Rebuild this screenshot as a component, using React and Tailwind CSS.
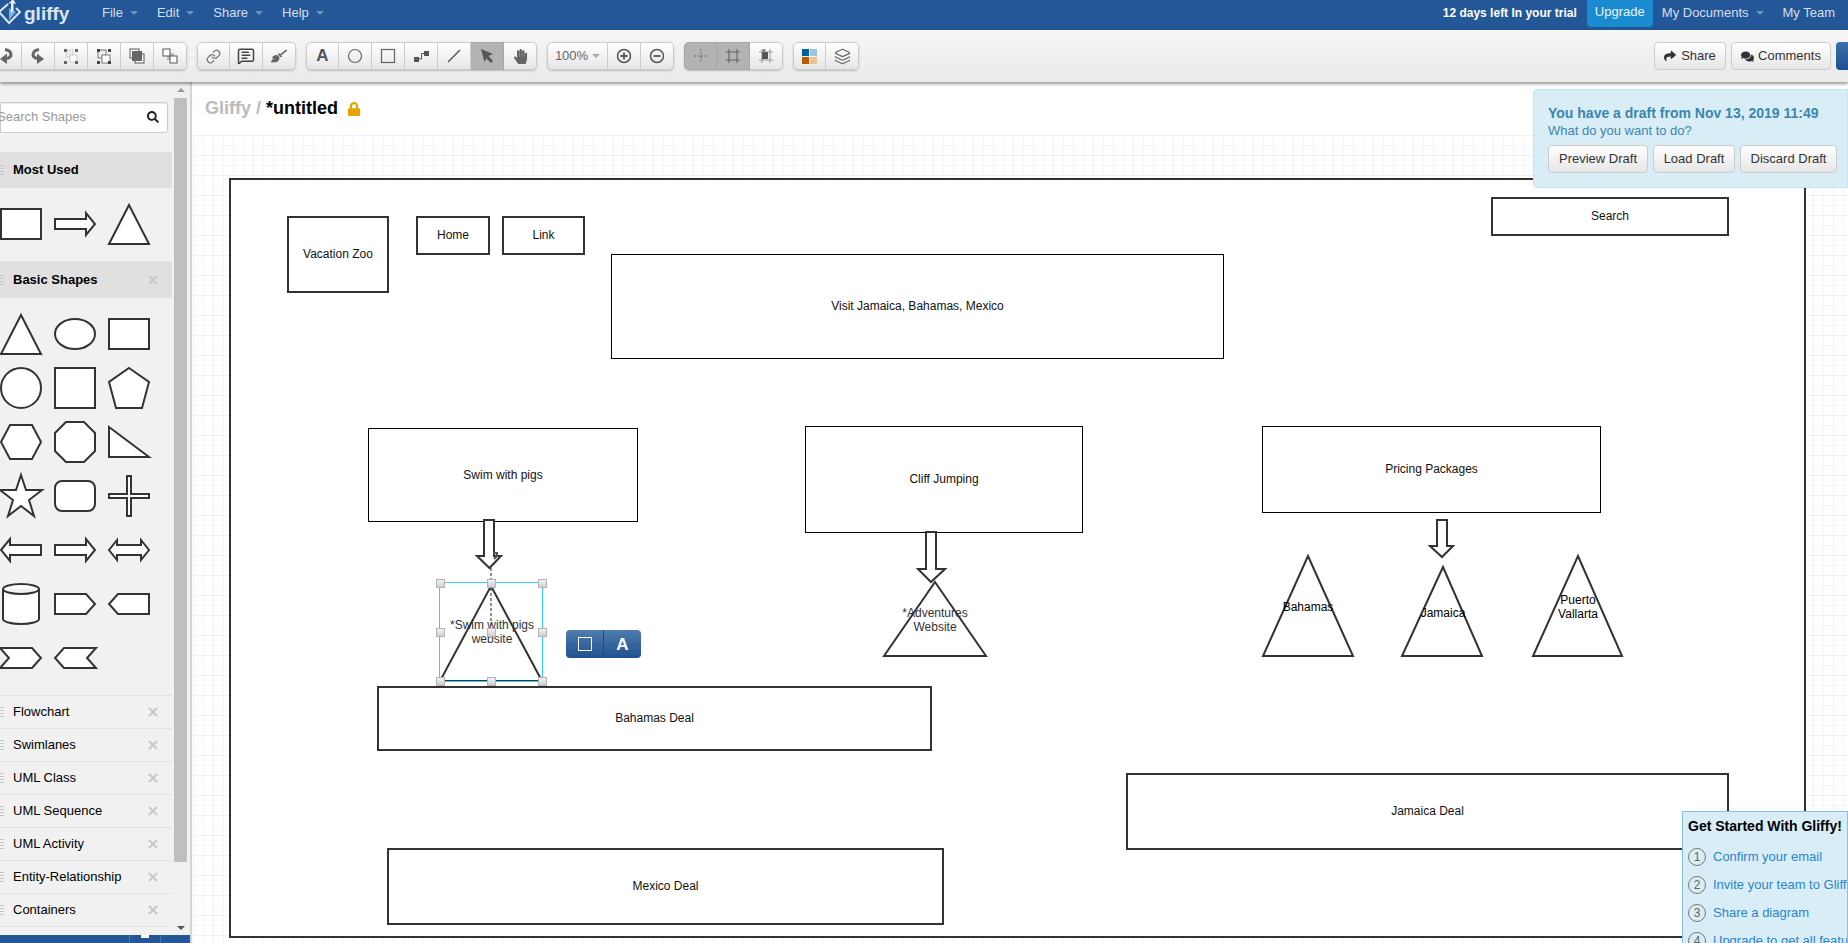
import { FaBroom, FaComments, FaHandPaper, FaLock, FaSearch, FaShare } from "react-icons/fa";
import { Layers, Link as LinkIcon, MessageSquareText } from "lucide-react";

const Caret = ({ className = "border-t-[#6f93bd]" }) => (
    <span className={`inline-block w-0 h-0 border-x-[4px] border-x-transparent border-t-[4px] ${className}`} />
);

const Logo = () => (
    <svg width="24" height="30" viewBox="0 0 24 30" className="shrink-0">
        <path d="M10 5 L1 13 L11 24 L22 13 L18 9" fill="none" stroke="#dbe6f2" strokeWidth="2" />
        <path d="M11 21 L18 13 L11 9 Z" fill="#7fb0dc" />
        <path d="M13 14 L13 4 L10 5 L15 0 L18 5 L15.5 4.5 L15.5 12 Z" fill="#e8f0f8" />
    </svg>
);

const TopBar = () => (
    <div className="h-[30px] bg-[#235797] flex items-start shrink-0 text-[13px] text-[#d5dfeb]">
        <div className="w-[102px] h-[27px] flex items-center -ml-[2px] shrink-0">
            <Logo />
            <span className="text-[19px] font-bold text-[#dbe6f2] leading-none -mt-[1px] ml-[2px]">gliffy</span>
        </div>
        <div className="flex gap-[19px] h-[26px] items-center ml-[2px]">
            {["File", "Edit", "Share", "Help"].map((m) => (
                <div key={m} className="flex items-center gap-[7px]">
                    {m}
                    <Caret />
                </div>
            ))}
        </div>
        <div className="ml-auto flex items-start mr-[13px]">
            <span className="text-[12px] font-bold text-white h-[26px] leading-[26px] mr-[10px]">
                12 days left In your trial
            </span>
            <span className="bg-[#1a8bd0] text-[#e8f3fb] w-[66px] h-[27px] leading-[24px] text-center rounded-b-[4px]">
                Upgrade
            </span>
            <span className="ml-[9px] h-[26px] flex items-center gap-[7px]">
                My Documents
                <Caret />
            </span>
            <span className="ml-[19px] h-[26px] leading-[26px]">My Team</span>
        </div>
    </div>
);

const Group = ({ children }) => (
    <div className="flex rounded-[5px] shadow-[0_1px_2px_rgba(0,0,0,0.2)] shrink-0">{children}</div>
);

const Btn = ({ children, active, w = "w-[33px]" }) => (
    <div
        className={`${w} h-[28px] flex items-center justify-center border-y border-r first:border-l first:rounded-l-[5px] last:rounded-r-[5px] ${
            active
                ? "bg-[#b3b3b3] border-[#a6a6a6]"
                : "bg-gradient-to-b from-white to-[#e6e6e6] border-[#cccccc]"
        }`}
    >
        {children}
    </div>
);

const Ico = ({ children }) => (
    <svg width="20" height="20" viewBox="0 0 20 20" fill="none">
        {children}
    </svg>
);

const Dots = ({ fill }) => (
    <g fill={fill}>
        <rect x="3" y="3" width="3" height="3" />
        <rect x="14" y="3" width="3" height="3" />
        <rect x="3" y="15" width="3" height="3" />
        <rect x="14" y="15" width="3" height="3" />
    </g>
);

const Toolbar = () => (
    <div className="h-[52px] shrink-0 relative z-10 bg-gradient-to-b from-[#f6f6f6] to-[#eaeaea] shadow-[0_2px_3px_rgba(0,0,0,0.4)] flex items-center gap-[10px]">
        <div className="flex gap-[10px] -ml-[11px]">
            <Group>
                <Btn>
                    <Ico>
                        <g transform="translate(20 0) scale(-1 1)">
                            <path d="M11 3.5C4 4.5 3 11 9 12.5" stroke="#666" strokeWidth="3" />
                            <path d="M9 7.5L16 13L9 18Z" fill="#666" />
                        </g>
                    </Ico>
                </Btn>
                <Btn>
                    <Ico>
                        <path d="M11 3.5C4 4.5 3 11 9 12.5" stroke="#666" strokeWidth="3" />
                        <path d="M9 7.5L16 13L9 18Z" fill="#666" />
                    </Ico>
                </Btn>
                <Btn>
                    <Ico>
                        <rect x="5" y="4" width="7" height="7" fill="#eee" stroke="#ccc" />
                        <rect x="9" y="9" width="7" height="7" fill="#fff" stroke="#ccc" />
                        <Dots fill="#666" />
                    </Ico>
                </Btn>
                <Btn>
                    <Ico>
                        <rect x="4" y="4" width="8" height="8" fill="#eee" stroke="#777" />
                        <rect x="8" y="9" width="8" height="8" fill="#fff" stroke="#777" />
                        <Dots fill="#444" />
                    </Ico>
                </Btn>
                <Btn>
                    <Ico>
                        <rect x="8" y="8" width="9" height="9" fill="#fff" stroke="#555" />
                        <rect x="3" y="3" width="9" height="9" fill="#fff" stroke="#555" />
                        <rect x="5" y="5" width="10" height="10" fill="#666" />
                    </Ico>
                </Btn>
                <Btn>
                    <Ico>
                        <rect x="7" y="7" width="7" height="7" fill="#bbb" />
                        <rect x="3" y="3" width="7" height="7" fill="#fff" stroke="#555" />
                        <rect x="10" y="10" width="7" height="7" fill="#fff" stroke="#555" />
                    </Ico>
                </Btn>
            </Group>
            <Group>
                <Btn>
                    <LinkIcon size={15} color="#777" strokeWidth={2} />
                </Btn>
                <Btn>
                    <MessageSquareText size={18} color="#444" strokeWidth={2} />
                </Btn>
                <Btn>
                    <FaBroom size={16} color="#666" />
                </Btn>
            </Group>
            <Group>
                <Btn>
                    <span className="text-[17px] font-bold text-[#555]">A</span>
                </Btn>
                <Btn>
                    <Ico>
                        <circle cx="10" cy="10" r="6.5" stroke="#666" strokeWidth="1.2" />
                    </Ico>
                </Btn>
                <Btn>
                    <Ico>
                        <rect x="3.5" y="3.5" width="13" height="13" stroke="#666" strokeWidth="1.2" />
                    </Ico>
                </Btn>
                <Btn>
                    <Ico>
                        <rect x="3" y="11" width="5" height="5" fill="#555" />
                        <rect x="13" y="5" width="5" height="5" fill="#555" />
                        <path d="M8 13H10.5V7.5H13" stroke="#555" />
                    </Ico>
                </Btn>
                <Btn>
                    <Ico>
                        <path d="M4 16L16 4" stroke="#555" strokeWidth="1.5" />
                    </Ico>
                </Btn>
                <Btn active>
                    <Ico>
                        <path d="M4 3L16 8L11.5 10L16 15L14 17L9.5 12.5L7.5 16Z" fill="#555" />
                    </Ico>
                </Btn>
                <Btn>
                    <FaHandPaper size={15} color="#666" />
                </Btn>
            </Group>
            <Group>
                <Btn w="w-[61px]">
                    <span className="text-[13px] text-[#666] mr-[4px]">100%</span>
                    <Caret className="border-t-[#aaa]" />
                </Btn>
                <Btn>
                    <Ico>
                        <circle cx="10" cy="10" r="6.5" stroke="#555" strokeWidth="1.5" />
                        <path d="M6.5 10H13.5M10 6.5V13.5" stroke="#555" strokeWidth="1.8" />
                    </Ico>
                </Btn>
                <Btn>
                    <Ico>
                        <circle cx="10" cy="10" r="6.5" stroke="#555" strokeWidth="1.5" />
                        <path d="M6.5 10H13.5" stroke="#555" strokeWidth="1.8" />
                    </Ico>
                </Btn>
            </Group>
            <Group>
                <Btn active>
                    <Ico>
                        <path d="M3 10H17M10 3V17" stroke="#666" strokeDasharray="2 1.5" />
                    </Ico>
                </Btn>
                <Btn active>
                    <Ico>
                        <path d="M3 6H17M3 14H17M6 3V17M14 3V17" stroke="#666" strokeWidth="1.2" />
                    </Ico>
                </Btn>
                <Btn>
                    <Ico>
                        <path d="M3 6H17M3 14H17M6 3V17M14 3V17" stroke="#999" />
                        <rect x="6" y="6" width="6" height="7" fill="#555" />
                        <path d="M6 3.5H10L8 6Z" fill="#555" />
                    </Ico>
                </Btn>
            </Group>
            <Group>
                <Btn>
                    <div className="grid grid-cols-2 gap-[1px]">
                        <div className="w-[7px] h-[7px] bg-[#005f9e]" />
                        <div className="w-[7px] h-[7px] bg-[#9cc3e0]" />
                        <div className="w-[7px] h-[7px] bg-[#b85a00]" />
                        <div className="w-[7px] h-[7px] bg-[#e8c197]" />
                    </div>
                </Btn>
                <Btn>
                    <Layers size={17} color="#666" strokeWidth={1.6} />
                </Btn>
            </Group>
        </div>
        <div className="ml-auto flex gap-[5px] -mr-[48px] text-[13px] text-[#333]">
            <div className="w-[72px] h-[28px] rounded-[4px] border border-[#ccc] bg-gradient-to-b from-white to-[#e6e6e6] flex items-center justify-center gap-[5px]">
                <FaShare size={12} color="#333" />
                Share
            </div>
            <div className="w-[100px] h-[28px] rounded-[4px] border border-[#ccc] bg-gradient-to-b from-white to-[#e6e6e6] flex items-center justify-center gap-[4px]">
                <FaComments size={13} color="#333" />
                Comments
            </div>
            <div className="w-[60px] h-[28px] rounded-[4px] bg-gradient-to-b from-[#3d70ab] to-[#1f4f8f]" />
        </div>
    </div>
);

const Shape = ({ children }) => (
    <svg width="54" height="54" viewBox="0 0 54 54" fill="#fff" stroke="#333" strokeWidth="2">
        {children}
    </svg>
);

const RIGHT_ARROW = "7,22 38,22 38,16 47,27 38,38 38,32 7,32";

const basicShapes = [
    <polygon points="27,8 47,47 7,47" />,
    <ellipse cx="27" cy="27" rx="20" ry="15" />,
    <rect x="7" y="12" width="40" height="30" />,
    <circle cx="27" cy="27" r="20" />,
    <rect x="7" y="7" width="40" height="40" />,
    <polygon points="27,7 47,21 40,47 14,47 7,21" />,
    <polygon points="7,27 16,10 38,10 47,27 38,44 16,44" />,
    <polygon points="7,18 18,7 36,7 47,18 47,36 36,47 18,47 7,36" />,
    <polygon points="7,12 47,42 7,42" />,
    <polygon points="27,6 32,21 48,21 35,31 40,47 27,37 14,47 19,31 6,21 22,21" />,
    <rect x="7" y="12" width="40" height="30" rx="7" />,
    <polygon points="25,7 29,7 29,25 47,25 47,29 29,29 29,47 25,47 25,29 7,29 7,25 25,25" />,
    <polygon points="7,27 16,16 16,22 47,22 47,32 16,32 16,38" />,
    <polygon points={RIGHT_ARROW} />,
    <polygon points="7,27 15,17 15,22 39,22 39,17 47,27 39,37 39,32 15,32 15,37" />,
    <path d="M9 12a18 5 0 0 1 36 0v30a18 5 0 0 1-36 0zM9 12a18 5 0 0 0 36 0" />,
    <polygon points="7,17 38,17 47,27 38,37 7,37" />,
    <polygon points="47,17 16,17 7,27 16,37 47,37" />,
    <polygon points="6,17 38,17 47,27 38,37 6,37 15,27" />,
    <polygon points="48,17 16,17 7,27 16,37 48,37 39,27" />,
];

const Grip = () => (
    <div className="flex flex-col gap-[2px] w-[4px] shrink-0">
        <div className="h-px bg-[#c6c6c6]" />
        <div className="h-px bg-[#c6c6c6]" />
        <div className="h-px bg-[#c6c6c6]" />
        <div className="h-px bg-[#c6c6c6]" />
    </div>
);

const CloseX = () => (
    <svg width="10" height="10" viewBox="0 0 10 10" className="ml-auto mr-[14px] shrink-0">
        <path d="M1 1L9 9M9 1L1 9" stroke="#c8c8c8" strokeWidth="2" />
    </svg>
);

const Sidebar = () => (
    <div className="w-[192px] shrink-0 flex flex-col bg-[#f1f1f1] border-r-2 border-[#d4d4d4] text-[13px] text-black overflow-hidden">
        <div className="flex flex-1 min-h-0">
            <div className="w-[174px] shrink-0 pt-[20px]">
                <div className="w-[168px] h-[31px] pb-[2px] bg-white border border-[#ccc] rounded-r-[3px] flex items-center text-[13px] text-[#999] shadow-[inset_0_1px_1px_rgba(0,0,0,0.08)]">
                    <span className="-ml-[4px]">Search Shapes</span>
                    <FaSearch size={12} color="#222" className="ml-auto mr-[8px]" />
                </div>
                <div className="w-[172px] h-[36px] mt-[19px] bg-[#e0e0e0] flex items-center gap-[9px] font-bold">
                    <Grip />
                    Most Used
                </div>
                <div className="grid grid-cols-[54px_54px_54px] auto-rows-[54px] -ml-[6px] pt-[9px] pb-[10px]">
                    <Shape>
                        <rect x="7" y="12" width="40" height="30" />
                    </Shape>
                    <Shape>
                        <polygon points={RIGHT_ARROW} />
                    </Shape>
                    <Shape>
                        <polygon points="27,8 47,47 7,47" />
                    </Shape>
                </div>
                <div className="w-[172px] h-[37px] bg-[#e0e0e0] flex items-center gap-[9px] font-bold">
                    <Grip />
                    Basic Shapes
                    <CloseX />
                </div>
                <div className="grid grid-cols-[54px_54px_54px] auto-rows-[54px] -ml-[6px] pt-[9px] pb-[10px]">
                    {basicShapes.map((s, i) => (
                        <Shape key={i}>{s}</Shape>
                    ))}
                </div>
                <div className="w-[172px] border-t border-[#e2e2e2]">
                    {["Flowchart", "Swimlanes", "UML Class", "UML Sequence", "UML Activity", "Entity-Relationship", "Containers"].map((name) => (
                        <div key={name} className="h-[33px] border-b border-[#e2e2e2] flex items-center gap-[9px]">
                            <Grip />
                            {name}
                            <CloseX />
                        </div>
                    ))}
                </div>
            </div>
            <div className="w-[13px] shrink-0 flex flex-col items-center pt-[6px]">
                <Caret className="rotate-180 border-t-[#999]" />
                <div className="w-full h-[767px] mt-[6px] bg-[#bfbfbf]" />
                <div className="mt-[54px]">
                    <Caret className="border-t-[#555]" />
                </div>
            </div>
        </div>
        <div className="h-[8px] shrink-0 -mr-[3px] bg-[#235797] flex justify-end">
            <div className="w-[31px] border-l border-[#4a76ad] flex justify-center">
                <div className="w-[8px] h-[3px] bg-white" />
            </div>
            <div className="w-[33px] border-l border-[#4a76ad]" />
        </div>
    </div>
);

const Box = ({ className, children, thin }) => (
    <div
        className={`absolute flex items-center justify-center pb-[1px] text-[12px] text-[#111] bg-white ${
            thin ? "border border-black" : "border-2 border-[#333]"
        } ${className}`}
    >
        {children}
    </div>
);

const Label = ({ className, children }) => (
    <div className={`absolute w-[100px] text-center text-[12px] leading-[14px] text-[#222] ${className}`}>{children}</div>
);

const Handle = ({ className }) => (
    <div className={`absolute w-[9px] h-[9px] border border-[#b4b4b4] bg-gradient-to-b from-[#f2f2f2] to-[#cfcfcf] ${className}`} />
);

const Diagram = () => (
    <div className="absolute inset-0">
        <div className="absolute left-[39px] top-[96px] w-[1577px] h-[760px] bg-white border-2 border-[#333]" />
        <Box className="left-[97px] top-[134px] w-[102px] h-[77px]">Vacation Zoo</Box>
        <Box className="left-[226px] top-[134px] w-[74px] h-[39px]">Home</Box>
        <Box className="left-[312px] top-[134px] w-[83px] h-[39px]">Link</Box>
        <Box thin className="left-[421px] top-[172px] w-[613px] h-[105px]">Visit Jamaica, Bahamas, Mexico</Box>
        <Box className="left-[1301px] top-[115px] w-[238px] h-[39px]">Search</Box>
        <Box thin className="left-[178px] top-[346px] w-[270px] h-[94px]">Swim with pigs</Box>
        <Box thin className="left-[615px] top-[344px] w-[278px] h-[107px]">Cliff Jumping</Box>
        <Box thin className="left-[1072px] top-[344px] w-[339px] h-[87px]">Pricing Packages</Box>
        <Box className="left-[187px] top-[604px] w-[555px] h-[65px]">Bahamas Deal</Box>
        <Box className="left-[936px] top-[691px] w-[603px] h-[77px]">Jamaica Deal</Box>
        <Box className="left-[197px] top-[766px] w-[557px] h-[77px]">Mexico Deal</Box>

        <svg className="absolute inset-0 w-full h-full" viewBox="190 82 1658 861" fill="none" stroke="#333" strokeWidth="2">
            <polygon points="484,520 494,520 494,556 501,556 489.5,568 477,556 484,556" fill="#fff" />
            <polygon points="926,532 936,532 936,569 945,569 931,582 918,569 926,569" fill="#fff" />
            <polygon points="1437,520 1447,520 1447,546 1453,546 1442,557 1430,546 1437,546" fill="#fff" />
            <polygon points="491,586 542,681 440,681" fill="#fff" />
            <polygon points="935,582 986,656 884,656" fill="#fff" />
            <polygon points="1308,556 1353,656 1263,656" fill="#fff" />
            <polygon points="1443,567 1482,656 1402,656" fill="#fff" />
            <polygon points="1578,556 1622,656 1533,656" fill="#fff" />
            <path d="M491 568V630" stroke="#222" strokeWidth="1" strokeDasharray="3 2" />
            <path d="M493 553H497V556L494 559" stroke="#555" strokeWidth="2" />
            <rect x="439.5" y="582.5" width="103" height="99" stroke="#33ccff" strokeWidth="1" />
        </svg>

        <Label className="left-[252px] top-[536px] text-[#333]">
            *Swim with pigs
            <br />
            website
        </Label>
        <Label className="left-[695px] top-[524px] text-[#333]">
            *Adventures
            <br />
            Website
        </Label>
        <Label className="left-[1068px] top-[518px] text-black">Bahamas</Label>
        <Label className="left-[1203px] top-[524px] text-black">Jamaica</Label>
        <Label className="left-[1338px] top-[511px] text-black">
            Puerto
            <br />
            Vallarta
        </Label>

        <Handle className="left-[246px] top-[497px]" />
        <Handle className="left-[297px] top-[497px]" />
        <Handle className="left-[348px] top-[497px]" />
        <Handle className="left-[246px] top-[546px]" />
        <Handle className="left-[297px] top-[546px]" />
        <Handle className="left-[348px] top-[546px]" />
        <Handle className="left-[246px] top-[595px]" />
        <Handle className="left-[297px] top-[595px]" />
        <Handle className="left-[348px] top-[595px]" />

        <div className="absolute left-[376px] top-[548px] w-[75px] h-[28px] rounded-[4px] bg-gradient-to-b from-[#4f7dae] to-[#20508f] flex items-center text-white">
            <div className="w-[38px] h-full border-r border-[#1d4a82] flex items-center justify-center">
                <div className="w-[14px] h-[14px] border border-white" />
            </div>
            <div className="flex-1 text-center text-[17px] font-bold leading-none">A</div>
        </div>
    </div>
);

const DraftPanel = () => (
    <div className="absolute left-[1343px] right-0 top-[7px] h-[99px] bg-[#d9edf7] border border-[#bce8f1] rounded-l-[4px] pl-[14px] pt-[15px] text-[#3a87ad]">
        <div className="text-[14px] font-bold leading-[17px]">You have a draft from Nov 13, 2019 11:49</div>
        <div className="text-[13px] leading-[17px]">What do you want to do?</div>
        <div className="flex gap-[5px] mt-[6px] text-[13px] text-[#333]">
            <div className="w-[100px] h-[28px] rounded-[4px] border border-[#ccc] bg-gradient-to-b from-white to-[#e6e6e6] flex items-center justify-center">
                Preview Draft
            </div>
            <div className="w-[82px] h-[28px] rounded-[4px] border border-[#ccc] bg-gradient-to-b from-white to-[#e6e6e6] flex items-center justify-center">
                Load Draft
            </div>
            <div className="w-[97px] h-[28px] rounded-[4px] border border-[#ccc] bg-gradient-to-b from-white to-[#e6e6e6] flex items-center justify-center">
                Discard Draft
            </div>
        </div>
    </div>
);

const GetStarted = () => (
    <div className="absolute left-[1492px] right-0 top-[729px] h-[160px] bg-[#d9edf7] border border-[#85c0e6] pl-[5px] pt-[6px] whitespace-nowrap overflow-hidden">
        <div className="text-[14px] font-bold text-black leading-[17px] mb-[8px]">Get Started With Gliffy!</div>
        {["Confirm your email", "Invite your team to Gliffy", "Share a diagram", "Upgrade to get all features"].map((step, i) => (
            <div key={step} className="h-[28px] flex items-center text-[13px] text-[#2a85cc]">
                <span className="w-[18px] h-[18px] rounded-full border border-[#777] text-[#666] flex items-center justify-center text-[12px] shrink-0 mr-[7px]">
                    {i + 1}
                </span>
                {step}
            </div>
        ))}
    </div>
);

export default function App() {
    return (
        <div className="w-[1848px] h-[943px] overflow-hidden flex flex-col bg-white [font-family:'Liberation_Sans',Arial,sans-serif]">
            <TopBar />
            <Toolbar />
            <div className="flex flex-1 min-h-0">
                <Sidebar />
                <div className="relative flex-1 min-w-0 overflow-hidden -ml-[2px]">
                    <div className="h-[53px] pl-[15px] flex items-center gap-[9px] text-[18px] font-bold">
                        <div>
                            <span className="text-[#bbb]">Gliffy / </span>
                            <span className="text-black">*untitled</span>
                        </div>
                        <FaLock size={14} color="#e8a200" />
                    </div>
                    <div className="absolute left-[3px] right-0 top-[53px] bottom-0 bg-[linear-gradient(#eeeeff_1px,transparent_1px),linear-gradient(90deg,#eeeeff_1px,transparent_1px),linear-gradient(#f5f5ff_1px,transparent_1px),linear-gradient(90deg,#f5f5ff_1px,transparent_1px)] bg-[size:20px_20px,20px_20px,10px_10px,10px_10px]" />
                    <Diagram />
                    <DraftPanel />
                    <GetStarted />
                </div>
            </div>
        </div>
    );
}
